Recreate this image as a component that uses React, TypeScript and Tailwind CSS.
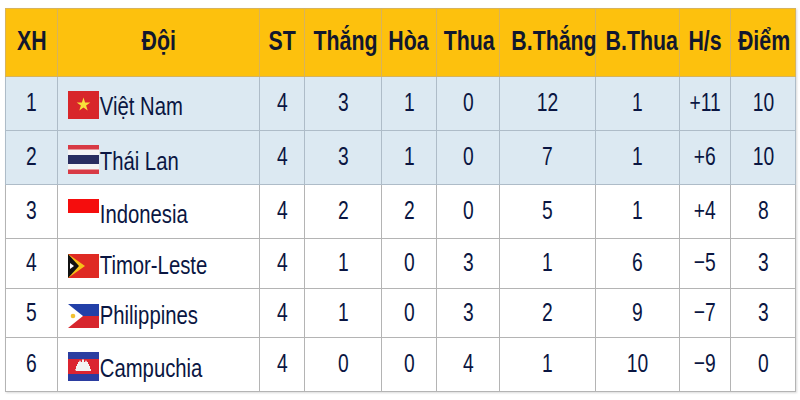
import React from "react";

type Row = {
  pos: number;
  team: string;
  flag: string;
  st: number;
  w: number;
  d: number;
  l: number;
  gf: number;
  ga: number;
  gd: string;
  pts: number;
  h: string;
};

const rows: Row[] = [
  { pos: 1, team: "Việt Nam", flag: "vn", st: 4, w: 3, d: 1, l: 0, gf: 12, ga: 1, gd: "+11", pts: 10, h: "h-[54px]" },
  { pos: 2, team: "Thái Lan", flag: "th", st: 4, w: 3, d: 1, l: 0, gf: 7, ga: 1, gd: "+6", pts: 10, h: "h-[54px]" },
  { pos: 3, team: "Indonesia", flag: "id", st: 4, w: 2, d: 2, l: 0, gf: 5, ga: 1, gd: "+4", pts: 8, h: "h-[54px]" },
  { pos: 4, team: "Timor-Leste", flag: "tl", st: 4, w: 1, d: 0, l: 3, gf: 1, ga: 6, gd: "−5", pts: 3, h: "h-[50px]" },
  { pos: 5, team: "Philippines", flag: "ph", st: 4, w: 1, d: 0, l: 3, gf: 2, ga: 9, gd: "−7", pts: 3, h: "h-[49px]" },
  { pos: 6, team: "Campuchia", flag: "kh", st: 4, w: 0, d: 0, l: 4, gf: 1, ga: 10, gd: "−9", pts: 0, h: "h-[54px]" },
];

const headers = [
  { label: "XH", w: "w-[52px]" },
  { label: "Đội", w: "w-[202px]" },
  { label: "ST", w: "w-[45px]" },
  { label: "Thắng", w: "w-[77px]" },
  { label: "Hòa", w: "w-[55px]" },
  { label: "Thua", w: "w-[63px]" },
  { label: "B.Thắng", w: "w-[96px]" },
  { label: "B.Thua", w: "w-[84px]" },
  { label: "H/s", w: "w-[51px]" },
  { label: "Điểm", w: "w-[65px]" },
];

function Flag({ code }: { code: string }) {
  if (code === "vn")
    return (
      <svg width="31" height="28" viewBox="0 0 31 28" className="shrink-0">
        <rect width="31" height="28" fill="#d8262a" />
        <polygon
          points="15.5,6.5 17.1,11.5 22.3,11.5 18.1,14.5 19.7,19.5 15.5,16.5 11.3,19.5 12.9,14.5 8.7,11.5 13.9,11.5"
          fill="#f8e03a"
        />
      </svg>
    );
  if (code === "th")
    return (
      <svg width="31" height="29" viewBox="0 0 31 29" className="shrink-0">
        <rect width="31" height="29" fill="#f5f5f5" />
        <rect y="0" width="31" height="4.5" fill="#d83a45" />
        <rect y="10" width="31" height="9" fill="#2a2e60" />
        <rect y="24.5" width="31" height="4.5" fill="#d83a45" />
      </svg>
    );
  if (code === "id")
    return (
      <svg width="31" height="28" viewBox="0 0 31 28" className="shrink-0">
        <rect width="31" height="14" fill="#f50d0d" />
        <rect y="14" width="31" height="14" fill="#ffffff" />
      </svg>
    );
  if (code === "tl")
    return (
      <svg width="31" height="24" viewBox="0 0 31 24" className="shrink-0">
        <rect width="31" height="24" fill="#df2a23" />
        <polygon points="0,0 17,12 0,24" fill="#f6c019" />
        <polygon points="0,0 11,12 0,24" fill="#111111" />
        <polygon points="2,9 6,12 2,15" fill="#ffffff" />
      </svg>
    );
  if (code === "ph")
    return (
      <svg width="31" height="24" viewBox="0 0 31 24" className="shrink-0">
        <rect width="31" height="12" fill="#2240a8" />
        <rect y="12" width="31" height="12" fill="#d7262d" />
        <polygon points="0,0 15,12 0,24" fill="#ffffff" />
        <circle cx="5" cy="12" r="2.3" fill="#f2c232" />
      </svg>
    );
  return (
    <svg width="31" height="29" viewBox="0 0 31 29" className="shrink-0">
      <rect width="31" height="29" fill="#2b3da0" />
      <rect y="7" width="31" height="15" fill="#db2430" />
      <path d="M8 19h15v-2h-1v-3h-1v-2h-1v-2h-1l-1-2-1 2h-1v-2l-1-1-1 1v2h-1l-1-2-1 2h-1v2h-1v2h-1v3h-1z" fill="#f2f2f2" />
    </svg>
  );
}

function Txt({ children, bold }: { children: React.ReactNode; bold?: boolean }) {
  return (
    <span
      className={
        bold
          ? "inline-block scale-x-[0.79] text-[27px] font-bold leading-none text-[#11172e]"
          : "inline-block scale-x-[0.74] text-[26px] leading-none text-[#0a1642]"
      }
    >
      {children}
    </span>
  );
}

export default function App() {
  return (
    <div className="h-[400px] w-[800px] bg-white pl-[5px] pt-[8px] font-['Liberation_Sans',Arial,sans-serif]">
      <table className="w-[790px] table-fixed border-collapse shadow-[1px_1px_2px_rgba(0,0,0,0.15)]">
        <thead>
          <tr className="h-[68px] bg-[#fdc10d]">
            {headers.map((h) => (
              <th
                key={h.label}
                className={`${h.w} border border-[#d7b35c] p-0 text-center align-middle`}
              >
                <Txt bold>{h.label}</Txt>
              </th>
            ))}
          </tr>
        </thead>
        <tbody>
          {rows.map((r) => {
            const blue = r.pos <= 2;
            const line = blue ? "border-[#aebcc8]" : "border-[#b4b4b4]";
            const cell = `border p-0 text-center align-middle ${line}`;
            return (
              <tr key={r.pos} className={`${r.h} ${blue ? "bg-[#dce9f2]" : "bg-white"}`}>
                <td className={cell}>
                  <Txt>{r.pos}</Txt>
                </td>
                <td className={`border p-0 align-middle ${line}`}>
                  <div className="flex items-end pl-[10px] pt-[3px]">
                    <Flag code={r.flag} />
                    <span className="inline-block origin-left scale-x-[0.78] pl-px text-[26px] leading-none text-[#0a1642]">
                      {r.team}
                    </span>
                  </div>
                </td>
                <td className={cell}>
                  <Txt>{r.st}</Txt>
                </td>
                <td className={cell}>
                  <Txt>{r.w}</Txt>
                </td>
                <td className={cell}>
                  <Txt>{r.d}</Txt>
                </td>
                <td className={cell}>
                  <Txt>{r.l}</Txt>
                </td>
                <td className={cell}>
                  <Txt>{r.gf}</Txt>
                </td>
                <td className={cell}>
                  <Txt>{r.ga}</Txt>
                </td>
                <td className={cell}>
                  <Txt>{r.gd}</Txt>
                </td>
                <td className={cell}>
                  <Txt>{r.pts}</Txt>
                </td>
              </tr>
            );
          })}
        </tbody>
      </table>
    </div>
  );
}
